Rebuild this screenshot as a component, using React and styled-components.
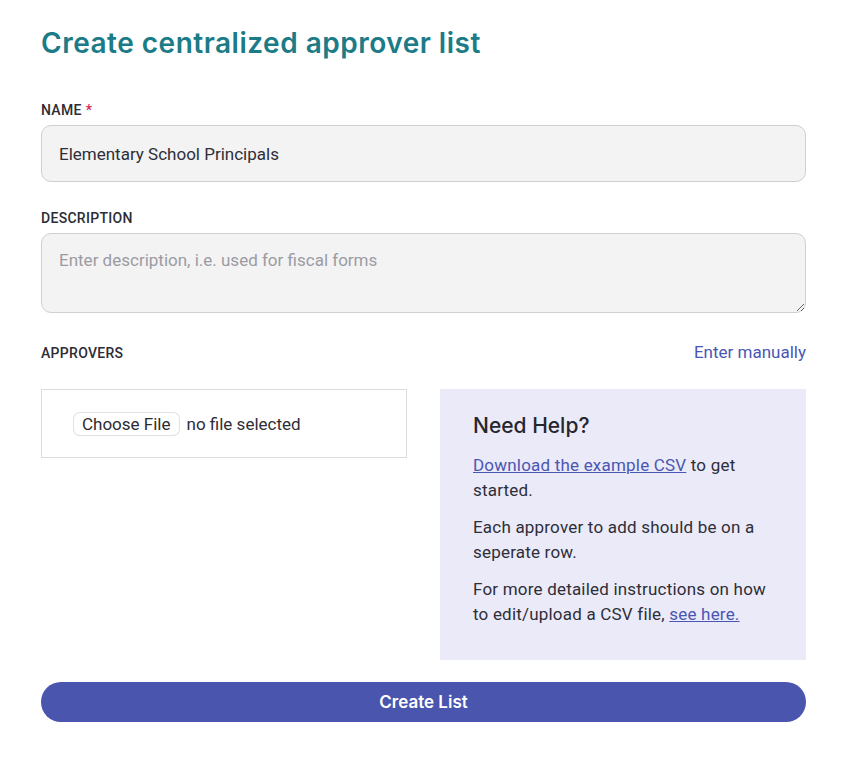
import React from 'react';
import styled, { createGlobalStyle } from 'styled-components';

const GlobalStyle = createGlobalStyle`
  body {
    margin: 0;
    background: #ffffff;
    font-family: Roboto, "Liberation Sans", sans-serif;
  }
`;

const Page = styled.div`
  width: 765px;
  margin-left: 41px;
  padding-top: 26px;
  padding-bottom: 40px;
`;

const Title = styled.h1`
  margin: 0 0 42px;
  font-family: Inter, "DejaVu Sans", sans-serif;
  font-size: 28px;
  font-weight: 600;
  line-height: 34px;
  color: #1b7b87;
  letter-spacing: 0.5px;
`;

const Field = styled.div`
  display: flex;
  flex-direction: column;
  margin-bottom: ${(p) => p.gap || 28}px;
`;

const LabelRow = styled.div`
  display: flex;
  justify-content: space-between;
  align-items: baseline;
  margin-bottom: 7px;
`;

const Label = styled.label`
  font-size: 14px;
  font-weight: 500;
  line-height: 16px;
  letter-spacing: 0.3px;
  color: #2c2c34;
  text-transform: uppercase;
`;

const Required = styled.span`
  color: #d6245a;
  margin-left: 4px;
`;

const TextInput = styled.input`
  box-sizing: border-box;
  height: 57px;
  padding: 0 17px;
  border: 1px solid #cfcfd3;
  border-radius: 10px;
  background: #f3f3f3;
  font-family: inherit;
  font-size: 17px;
  color: #2e2e38;
  outline: none;
`;

const TextArea = styled.textarea`
  box-sizing: border-box;
  height: 80px;
  padding: 15px 17px;
  border: 1px solid #cfcfd3;
  border-radius: 10px;
  background: #f3f3f3;
  font-family: inherit;
  font-size: 17px;
  line-height: 22px;
  color: #2e2e38;
  outline: none;
  resize: vertical;

  &::placeholder {
    color: #9b9ba3;
  }
`;

const TextLink = styled.a`
  font-size: 17px;
  color: #4a56b3;
  text-decoration: none;
  cursor: pointer;
`;

const UploadGrid = styled.div`
  display: grid;
  grid-template-columns: 366px 366px;
  justify-content: space-between;
  align-items: start;
  margin-top: 27px;
  margin-bottom: 22px;
`;

const FileBox = styled.div`
  box-sizing: border-box;
  height: 69px;
  display: flex;
  align-items: center;
  padding: 0 32px;
  border: 1px solid #dcdcdf;
  font-size: 17px;
  color: #2e2e38;
`;

const FileButton = styled.span`
  display: inline-block;
  padding: 1px 8px;
  margin-right: 8px;
  border-radius: 6px;
  background: #ffffff;
  box-shadow: 0 0 0 1px #e2e2e5, 0 1px 1px rgba(0, 0, 0, 0.12);
  font-size: 17px;
  line-height: 20px;
  color: #2b2b30;
  cursor: pointer;
`;

const HelpBox = styled.aside`
  box-sizing: border-box;
  height: 271px;
  padding: 24px 33px;
  background: #ebeaf8;
  color: #2e2e38;
`;

const HelpTitle = styled.h2`
  margin: 0 0 14px;
  font-family: Inter, "DejaVu Sans", sans-serif;
  font-size: 21px;
  font-weight: 500;
  line-height: 26px;
  color: #26262e;
`;

const HelpText = styled.p`
  margin: 0 0 12px;
  font-size: 17px;
  line-height: 25px;
  letter-spacing: 0.2px;
`;

const Underlined = styled.a`
  color: #4a56b3;
  text-decoration: underline;
  cursor: pointer;
`;

const SubmitButton = styled.button`
  width: 100%;
  height: 40px;
  border: none;
  border-radius: 20px;
  background: #4a55ad;
  color: #ffffff;
  font-family: Inter, "DejaVu Sans", sans-serif;
  font-size: 17px;
  font-weight: 600;
  cursor: pointer;
`;

export default function App() {
  return (
    <>
      <GlobalStyle />
      <Page>
        <Title>Create centralized approver list</Title>

        <Field>
          <LabelRow>
            <Label>
              Name<Required>*</Required>
            </Label>
          </LabelRow>
          <TextInput defaultValue="Elementary School Principals" />
        </Field>

        <Field gap={29}>
          <LabelRow>
            <Label>Description</Label>
          </LabelRow>
          <TextArea placeholder="Enter description, i.e. used for fiscal forms" />
        </Field>

        <LabelRow>
          <Label>Approvers</Label>
          <TextLink>Enter manually</TextLink>
        </LabelRow>

        <UploadGrid>
          <FileBox>
            <FileButton>Choose File</FileButton>
            no file selected
          </FileBox>
          <HelpBox>
            <HelpTitle>Need Help?</HelpTitle>
            <HelpText>
              <Underlined>Download the example CSV</Underlined> to get started.
            </HelpText>
            <HelpText>Each approver to add should be on a seperate row.</HelpText>
            <HelpText>
              For more detailed instructions on how to edit/upload a CSV file,{' '}
              <Underlined>see here.</Underlined>
            </HelpText>
          </HelpBox>
        </UploadGrid>

        <SubmitButton>Create List</SubmitButton>
      </Page>
    </>
  );
}
